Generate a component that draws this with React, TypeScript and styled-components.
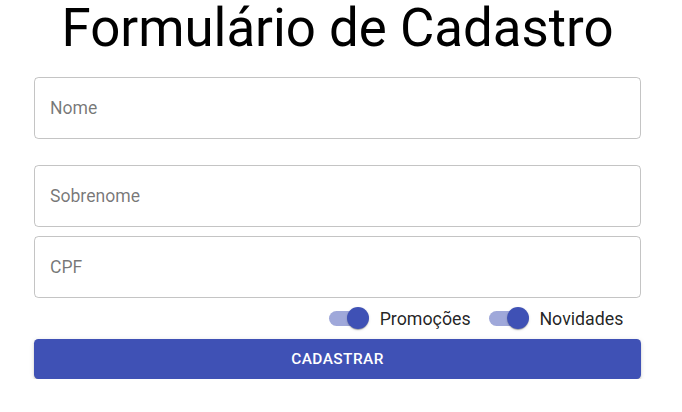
import React from "react";
import styled, { createGlobalStyle } from "styled-components";

const Global = createGlobalStyle`
  html, body { margin: 0; padding: 0; background: #fff; }
  body { font-family: Roboto, "Liberation Sans", Arial, sans-serif; }
`;

const Page = styled.div`
  width: 607px;
  padding-left: 34px;
  display: flex;
  flex-direction: column;
`;

const Title = styled.h1`
  margin: 0;
  font-family: Roboto, "Liberation Sans", Arial, sans-serif;
  font-weight: 400;
  font-size: 52.8px;
  line-height: 57px;
  color: #000;
  text-align: center;
  padding-bottom: 20px;
`;

const Field = styled.div<{ $mt: number }>`
  margin-top: ${(p) => p.$mt}px;
  height: 61.6px;
  box-sizing: border-box;
  border: 1px solid rgba(0, 0, 0, 0.23);
  border-radius: 4.4px;
  display: flex;
  align-items: center;
  padding: 0 15px;
  font-size: 17.6px;
  color: rgba(0, 0, 0, 0.54);
`;

const SwitchRow = styled.div`
  display: flex;
  justify-content: flex-end;
  align-items: center;
  height: 41.8px;
`;

const SwitchLabel = styled.label`
  display: flex;
  align-items: center;
  margin-right: 17.6px;
  margin-left: -12.8px;
  font-size: 17.8px;
  color: rgba(0, 0, 0, 0.87);
`;

const SwitchRoot = styled.span`
  position: relative;
  width: 64px;
  height: 41.8px;
  display: inline-block;
`;

const Track = styled.span`
  position: absolute;
  left: 13.2px;
  top: 13.2px;
  width: 37.4px;
  height: 15.4px;
  border-radius: 7.7px;
  background: #9fa8da;
`;

const Thumb = styled.span`
  position: absolute;
  left: 31.6px;
  top: 9.9px;
  width: 22px;
  height: 22px;
  border-radius: 50%;
  background: #3f51b5;
  box-shadow: 0 2px 1px -1px rgba(0, 0, 0, 0.2), 0 1px 1px 0 rgba(0, 0, 0, 0.14),
    0 1px 3px 0 rgba(0, 0, 0, 0.12);
`;

const Button = styled.button`
  height: 40px;
  border: none;
  border-radius: 4.4px;
  background: #3f51b5;
  color: #fff;
  font-family: Roboto, "Liberation Sans", Arial, sans-serif;
  font-weight: 500;
  font-size: 15.4px;
  letter-spacing: 0.44px;
  text-transform: uppercase;
  box-shadow: 0 3px 1px -2px rgba(0, 0, 0, 0.2), 0 2px 2px 0 rgba(0, 0, 0, 0.14),
    0 1px 5px 0 rgba(0, 0, 0, 0.12);
  cursor: pointer;
`;

const Toggle = ({ label }: { label: string }) => (
  <SwitchLabel>
    <SwitchRoot>
      <Track />
      <Thumb />
    </SwitchRoot>
    {label}
  </SwitchLabel>
);

export default function App() {
  return (
    <>
      <Global />
      <Page>
        <Title>Formulário de Cadastro</Title>
        <Field $mt={0}>Nome</Field>
        <Field $mt={26.4}>Sobrenome</Field>
        <Field $mt={9.4}>CPF</Field>
        <SwitchRow>
          <Toggle label="Promoções" />
          <Toggle label="Novidades" />
        </SwitchRow>
        <Button>Cadastrar</Button>
      </Page>
    </>
  );
}
